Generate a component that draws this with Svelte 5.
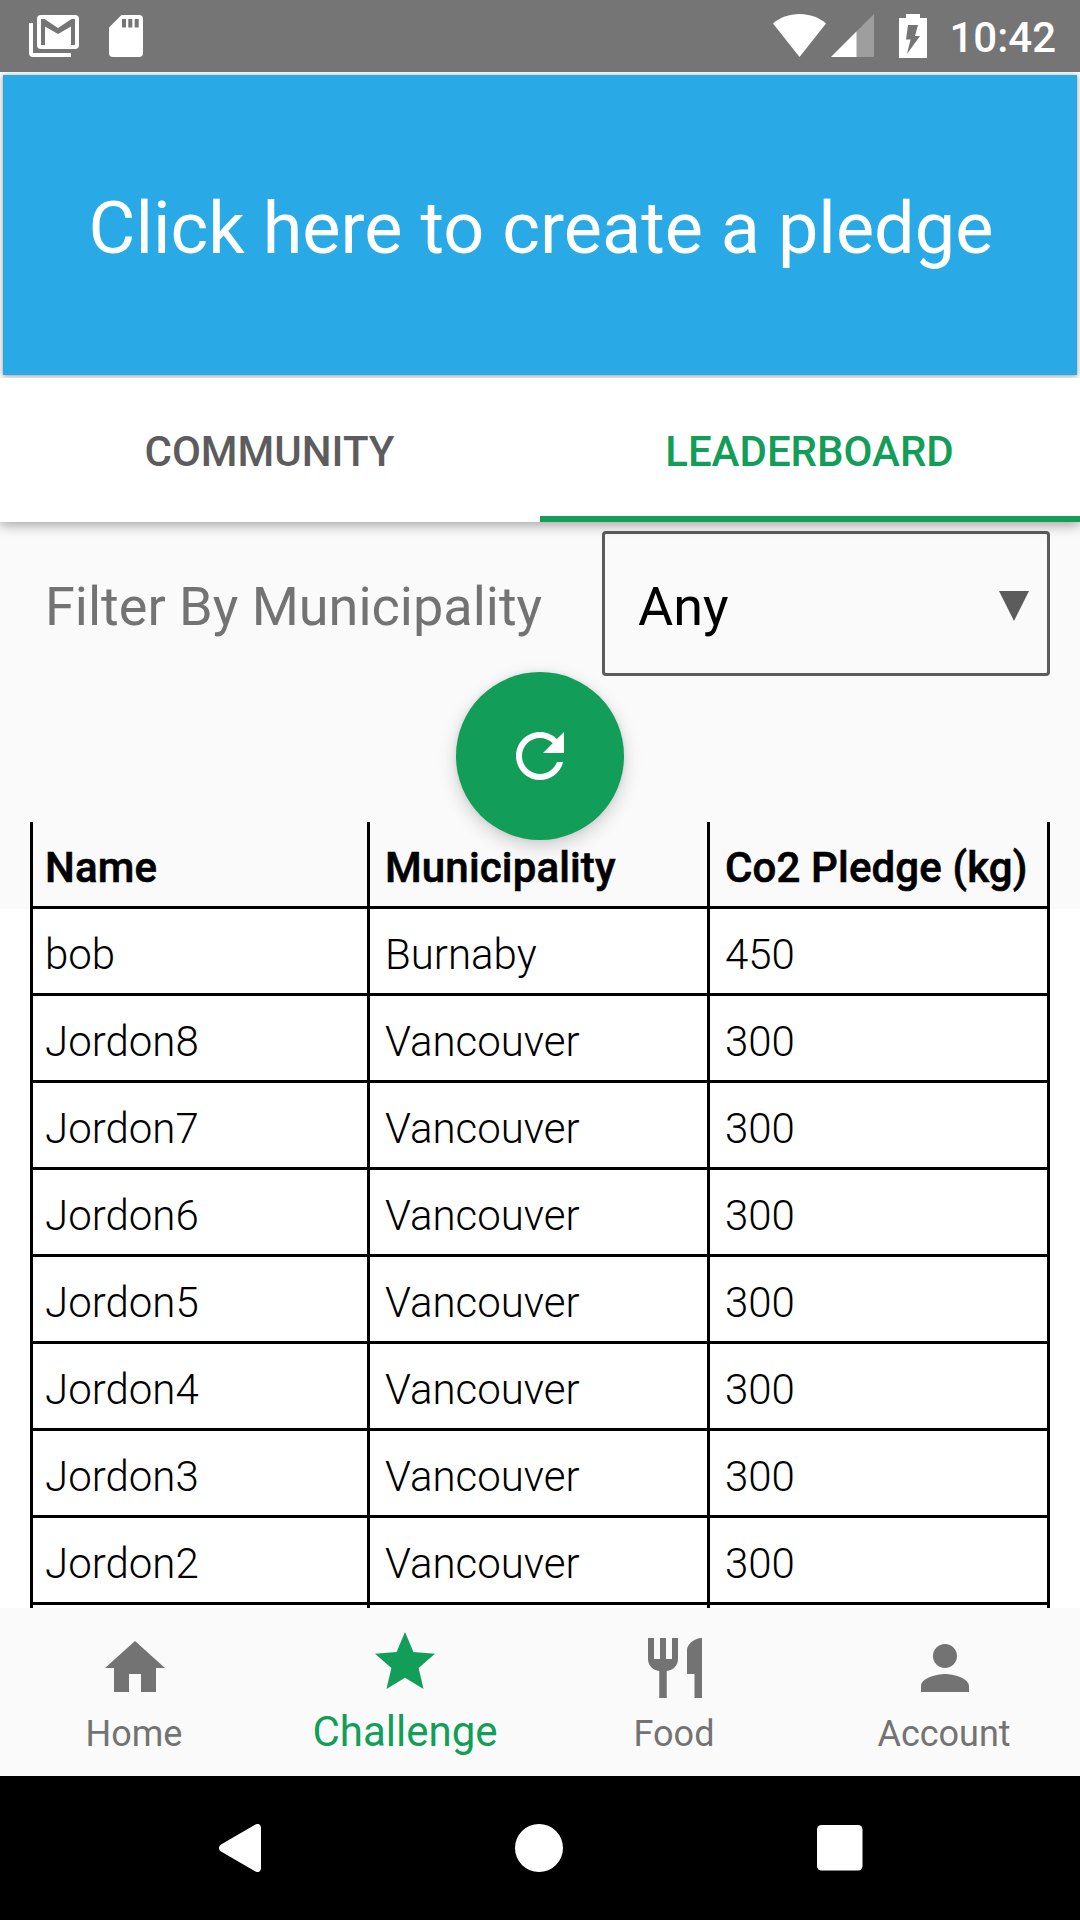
<script>
  const rows = [
    ['bob', 'Burnaby', '450'],
    ...[8, 7, 6, 5, 4, 3, 2].map((n) => [`Jordon${n}`, 'Vancouver', '300']),
    ['', '', '']
  ];

  const destinations = [
    { label: 'Home', icon: 'M10 20v-6h4v6h5v-8h3L12 3 2 12h3v8z' },
    {
      label: 'Challenge',
      active: true,
      icon: 'M12 17.27L18.18 21l-1.64-7.03L22 9.24l-7.19-.61L12 2 9.19 8.63 2 9.24l5.46 4.73L5.82 21z'
    },
    {
      label: 'Food',
      icon: 'M11 9H9V2H7v7H5V2H3v7c0 2.12 1.66 3.84 3.75 3.97V22h2.5v-9.03C11.34 12.84 13 11.12 13 9V2h-2v7zm5-3v8h2.5v8H21V2c-2.76 0-5 2.24-5 4z'
    },
    {
      label: 'Account',
      icon: 'M12 12c2.21 0 4-1.79 4-4s-1.79-4-4-4-4 1.79-4 4 1.79 4 4 4zm0 2c-2.67 0-8 1.34-8 4v2h16v-2c0-2.66-5.33-4-8-4z'
    }
  ];
</script>

<div class="screen">
  <header class="status">
    <svg class="gmail" width="50" height="42" viewBox="0 0 50 42">
      <path d="M0 8h4v30h38v4H4a4 4 0 0 1-4-4z" fill="#fff" />
      <rect x="8" y="0" width="42" height="34" rx="4" fill="#fff" />
      <path d="M12 30V4h3.5L29 13 42.5 4H46v26h-4V11.500L29 19 16 11.500V30z" fill="#757575" />
    </svg>
    <svg class="sd" width="34" height="42" viewBox="0 0 34 42">
      <path d="M12.500 0H30a4 4 0 0 1 4 4v34a4 4 0 0 1-4 4H4a4 4 0 0 1-4-4V12.500z" fill="#fff" />
      <path d="M13 4h4v8.500h-4zM19.300 4h4v8.500h-4zM25.700 4h4v8.500h-4z" fill="#757575" />
    </svg>
    <span class="spacer"></span>
    <svg class="wifi" width="53" height="43" viewBox="0 0 53 43">
      <path d="M0 9.500C7 3.500 16 0 26.500 0S46 3.500 53 9.500L26.500 43z" fill="#fff" />
    </svg>
    <svg class="signal" width="43" height="43" viewBox="0 0 43 43">
      <path d="M43 0v43H0z" fill="#9e9e9e" />
      <path d="M25.500 17.500V43H0z" fill="#fff" />
    </svg>
    <svg class="battery" width="28" height="44" viewBox="0 0 28 44">
      <path d="M7 0h14v4h7v40H0V4h7z" fill="#fff" />
      <path d="M9 11h10l-3 11h5L8 40l3.500-14.500H7z" fill="#757575" />
    </svg>
    <span class="time">10:42</span>
  </header>

  <section class="banner">
    <button class="pledge">Click here to create a pledge</button>
  </section>

  <nav class="tabs">
    <button class="tab">COMMUNITY</button>
    <button class="tab selected">LEADERBOARD</button>
  </nav>

  <main class="content">
    <div class="filter">
      <span class="filter-label">Filter By Municipality</span>
      <div class="select">
        <span>Any</span>
        <svg width="30" height="30" viewBox="0 0 30 30"><path d="M0 0h30L15 30z" fill="#5c5c5c" /></svg>
      </div>
    </div>

    <button class="fab" aria-label="Refresh">
      <svg width="72" height="72" viewBox="0 0 24 24">
        <path
          fill="#fff"
          d="M17.650 6.350C16.200 4.900 14.210 4 12 4c-4.420 0-7.990 3.580-7.990 8s3.570 8 7.990 8c3.730 0 6.840-2.550 7.730-6h-2.080c-.820 2.330-3.040 4-5.650 4-3.310 0-6-2.690-6-6s2.690-6 6-6c1.660 0 3.140.690 4.220 1.780L13 11h7V4l-2.350 2.350z"
        />
      </svg>
    </button>

    <div class="row head">
      <span>Name</span><span>Municipality</span><span>Co2 Pledge (kg)</span>
    </div>
    <div class="list">
      {#each rows as row}
        <div class="row">
          {#each row as cell}<span>{cell}</span>{/each}
        </div>
      {/each}
    </div>
  </main>

  <nav class="bottom">
    {#each destinations as item}
      <div class="dest" class:active={item.active}>
        <svg width="72" height="72" viewBox="0 0 24 24"><path d={item.icon} fill="currentColor" /></svg>
        <span>{item.label}</span>
      </div>
    {/each}
  </nav>

  <footer class="system">
    <svg width="42" height="48" viewBox="0 0 42 48">
      <path d="M36 .800C39 -1 42 0 42 4v40c0 4-3 5-6 3.200L2 27.500c-2.700-2-2.700-5 0-7z" fill="#fff" />
    </svg>
    <svg width="48" height="48" viewBox="0 0 48 48"><circle cx="24" cy="24" r="24" fill="#fff" /></svg>
    <svg width="46" height="46" viewBox="0 0 46 46"><rect width="45.500" height="45.500" rx="4.500" fill="#fff" /></svg>
  </footer>
</div>

<style>
  :global(body) {
    margin: 0;
  }
  button {
    border: 0;
    padding: 0;
    font: inherit;
    background: none;
  }
  svg {
    display: block;
    flex: none;
  }
  .screen {
    width: 1080px;
    height: 1920px;
    display: flex;
    flex-direction: column;
    overflow: hidden;
    background: #fafafa;
    font-family: Roboto, sans-serif;
    color: #000;
  }
  .status {
    height: 72px;
    flex: none;
    display: flex;
    align-items: flex-start;
    box-sizing: border-box;
    padding: 14px 24px 0 29px;
    background: #757575;
    color: #fff;
  }
  .gmail {
    margin-top: 1px;
  }
  .sd {
    margin: 1px 0 0 30px;
  }
  .spacer {
    flex: 1;
  }
  .signal {
    margin-left: 5px;
  }
  .battery {
    margin: 0 22px 0 25px;
  }
  .time {
    font-size: 42px;
    font-weight: 500;
    line-height: 48px;
  }
  .banner {
    height: 306px;
    flex: none;
    box-sizing: border-box;
    padding: 3px;
    display: flex;
    overflow: hidden;
  }
  .pledge {
    flex: 1;
    padding: 6px 0 0 2px;
    background: #29a9e5;
    color: #fff;
    font-size: 72px;
    letter-spacing: 0.03px;
    box-shadow: 0 1px 5px rgba(0, 0, 0, 0.4);
  }
  .tabs {
    height: 144px;
    flex: none;
    display: flex;
    background: #fff;
    box-shadow: 0 3px 12px rgba(0, 0, 0, 0.36);
    clip-path: inset(0 0 -30px 0);
    position: relative;
  }
  .tab {
    flex: 1;
    border-bottom: 6px solid transparent;
    padding: 8px 1px 0 0;
    font-size: 42px;
    font-weight: 500;
    color: #5c5c5c;
  }
  .selected {
    color: #129d58;
    border-color: #129d58;
  }
  .content {
    flex: 1;
    min-height: 0;
    display: flex;
    flex-direction: column;
    overflow: hidden;
  }
  .filter {
    display: flex;
    justify-content: space-between;
    align-items: center;
    padding: 9px 30px 0 45px;
    flex: none;
    font-size: 54px;
  }
  .filter-label {
    padding-top: 5px;
    color: #737373;
    white-space: nowrap;
  }
  .select {
    width: 448px;
    height: 145px;
    box-sizing: border-box;
    border: 3px solid #5c5c5c;
    border-radius: 4px;
    display: flex;
    align-items: center;
    justify-content: space-between;
    padding: 5px 18px 0 33px;
  }
  .fab {
    width: 168px;
    height: 168px;
    flex: none;
    align-self: center;
    margin: -4px 0 -18px;
    border-radius: 50%;
    background: #129d58;
    display: flex;
    align-items: center;
    justify-content: center;
    position: relative;
    z-index: 1;
    box-shadow: 0 6px 18px rgba(0, 0, 0, 0.18), 0 0 5px rgba(0, 0, 0, 0.08);
  }
  .row {
    display: grid;
    grid-template-columns: 337px 340px 343px;
    height: 87px;
    flex: none;
    padding: 0 30px;
    font-size: 42px;
    font-weight: 300;
  }
  .row span {
    box-sizing: border-box;
    height: 87px;
    border-left: 3px solid #000;
    border-bottom: 3px solid #000;
    padding: 7px 0 0 15px;
    line-height: 77px;
    white-space: nowrap;
  }
  .row span:first-child {
    padding-left: 12px;
  }
  .row span:last-child {
    border-right: 3px solid #000;
  }
  .row.head {
    font-weight: 500;
    letter-spacing: 0.14px;
    -webkit-text-stroke: 0.6px #000;
  }
  .list {
    flex: 1;
    min-height: 0;
    overflow: hidden;
    background: #fff;
  }
  .bottom {
    height: 168px;
    flex: none;
    display: flex;
    background: #fafafa;
  }
  .dest {
    flex: 1;
    display: flex;
    flex-direction: column;
    align-items: center;
    padding-top: 24px;
    font-size: 36px;
    line-height: 42px;
    color: #737373;
  }
  .dest span {
    margin-top: 9px;
    padding-right: 2px;
  }
  .dest.active {
    padding-top: 18px;
    font-size: 42px;
    line-height: 48px;
    color: #129d58;
  }
  .dest.active span {
    margin-top: 10px;
    padding-right: 0;
  }
  .system {
    height: 144px;
    flex: none;
    box-sizing: border-box;
    padding: 0 217px 0 219px;
    display: flex;
    align-items: center;
    justify-content: space-between;
    background: #000;
  }
</style>
